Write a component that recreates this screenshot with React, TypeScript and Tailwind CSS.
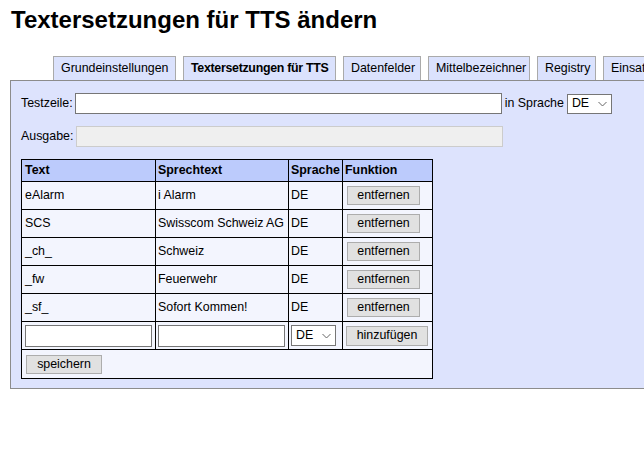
import React from 'react';

interface Ersetzung {
    text: string;
    sprechtext: string;
    sprache: string;
}

const tabs = [
    { label: 'Grundeinstellungen', w: 'w-[123px]' },
    { label: 'Textersetzungen für TTS', w: 'w-[153px]' },
    { label: 'Datenfelder', w: 'w-[78px]' },
    { label: 'Mittelbezeichner', w: 'w-[102px]' },
    { label: 'Registry', w: 'w-[59px]' },
    { label: 'Einsatzarten', w: 'w-[90px]' },
];

const rows: Ersetzung[] = [
    { text: 'eAlarm', sprechtext: 'i Alarm', sprache: 'DE' },
    { text: 'SCS', sprechtext: 'Swisscom Schweiz AG', sprache: 'DE' },
    { text: '_ch_', sprechtext: 'Schweiz', sprache: 'DE' },
    { text: '_fw', sprechtext: 'Feuerwehr', sprache: 'DE' },
    { text: '_sf_', sprechtext: 'Sofort Kommen!', sprache: 'DE' },
];

const Chevron = () => (
    <svg width="9" height="6" viewBox="0 0 9 6" className="ml-auto mr-[4px]">
        <path d="M0.5 1 L4.5 5 L8.5 1" fill="none" stroke="#666" strokeWidth="1" />
    </svg>
);

const SelectBox: React.FC<{ className?: string }> = ({ className }) => (
    <div className={`flex items-center bg-white border border-[#767676] h-[20px] pl-[4px] text-black ${className ?? ''}`}>
        DE
        <Chevron />
    </div>
);

const Btn: React.FC<{ label: string; className?: string }> = ({ label, className }) => (
    <div className={`flex items-center justify-center bg-[#e1e1e1] border border-[#adadad] h-[19px] text-black ${className ?? ''}`}>
        {label}
    </div>
);

const App: React.FC = () => {
    return (
        <div className="w-screen h-screen overflow-hidden bg-white font-['Liberation_Sans',Arial,sans-serif] text-black">
            <h1 className="pl-[11px] pt-[6px] text-[24px] font-bold leading-[28px]">Textersetzungen für TTS ändern</h1>

            {/* Reiter */}
            <div className="flex gap-[7px] pl-[53px] mt-[22px] whitespace-nowrap">
                {tabs.map((t, i) => (
                    <div
                        key={t.label}
                        className={`${t.w} shrink-0 h-[24px] pl-[7px] flex items-center overflow-hidden bg-[#dbe2fd] border border-b-0 border-[#aaaaaa] text-[12.4px] ${i === 1 ? 'font-bold tracking-[-0.3px]' : ''}`}
                    >
                        {t.label}
                    </div>
                ))}
            </div>

            {/* Panel */}
            <div className="ml-[10px] w-[700px] h-[309px] bg-[#dde3fd] border border-[#8c8c8c] pt-[12px] pl-[10px] text-[12.4px]">
                <div className="flex items-center h-[21px]">
                    <span>Testzeile:</span>
                    <div className="ml-[2px] w-[427px] h-[21px] bg-white border border-[#767676]" />
                    <span className="ml-[3px]">in Sprache</span>
                    <SelectBox className="ml-[3px] w-[45px]" />
                </div>

                <div className="flex items-center h-[21px] mt-[12px]">
                    <span>Ausgabe:</span>
                    <div className="ml-[3px] w-[427px] h-[21px] bg-[#efefef] border border-[#cccccc]" />
                </div>

                <table className="mt-[12px] border-collapse border border-black bg-[#f3f5fe] table-fixed w-[412px]">
                    <thead>
                        <tr className="bg-[#bccbfc] h-[22px]">
                            <th className="w-[134px] border border-black text-left px-[3px] font-bold">Text</th>
                            <th className="w-[133px] border border-black text-left px-[2px] font-bold">Sprechtext</th>
                            <th className="w-[54px] border border-black text-left px-[2px] font-bold whitespace-nowrap">Sprache</th>
                            <th className="border border-black text-left px-[2px] font-bold">Funktion</th>
                        </tr>
                    </thead>
                    <tbody>
                        {rows.map((r) => (
                            <tr key={r.text} className="h-[28px]">
                                <td className="border border-black px-[3px]">{r.text}</td>
                                <td className="border border-black px-[2px] whitespace-nowrap">{r.sprechtext}</td>
                                <td className="border border-black px-[2px]">{r.sprache}</td>
                                <td className="border border-black px-[4px]">
                                    <Btn label="entfernen" className="w-[73px]" />
                                </td>
                            </tr>
                        ))}
                        <tr className="h-[28px]">
                            <td className="border border-black px-[3px]">
                                <div className="w-[127px] h-[22px] bg-white border border-[#767676]" />
                            </td>
                            <td className="border border-black px-[2px]">
                                <div className="w-[127px] h-[22px] bg-white border border-[#767676]" />
                            </td>
                            <td className="border border-black px-[2px]">
                                <SelectBox className="w-[45px] h-[21px]" />
                            </td>
                            <td className="border border-black px-[3px]">
                                <Btn label="hinzufügen" className="w-[82px] h-[20px]" />
                            </td>
                        </tr>
                        <tr className="h-[29px]">
                            <td colSpan={4} className="border border-black px-[4px]">
                                <Btn label="speichern" className="w-[76px]" />
                            </td>
                        </tr>
                    </tbody>
                </table>
            </div>
        </div>
    );
};

export default App;
